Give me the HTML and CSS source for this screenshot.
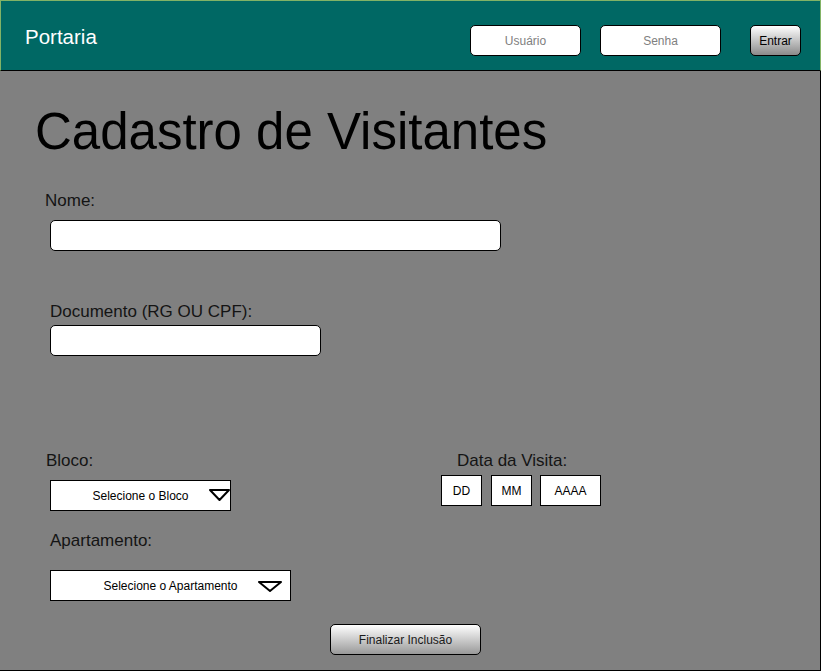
FILE: index.html
```html
<!DOCTYPE html>
<html lang="pt-BR">
<head>
<meta charset="utf-8">
<title>Portaria</title>
<link rel="stylesheet" href="styles.css">
</head>
<body>
<div class="page">
  <header class="topbar">
    <div class="brand">Portaria</div>
    <input class="login-field user" type="text" placeholder="Usuário">
    <input class="login-field pass" type="password" placeholder="Senha">
    <button class="btn btn-enter" type="button">Entrar</button>
  </header>
  <main class="content">
    <h1 class="title">Cadastro de Visitantes</h1>
    <label class="label label-nome">Nome:</label>
    <input class="field field-nome" type="text">
    <label class="label label-doc">Documento (RG OU CPF):</label>
    <input class="field field-doc" type="text">
    <div class="lower">
      <div class="col-left">
        <div class="label label-bloco">Bloco:</div>
        <div class="select select-bloco">
          <span>Selecione o Bloco</span>
          <svg class="caret caret-bloco" width="21" height="12" viewBox="0 0 21 12"><polygon points="1,1 20,1 10.5,11" fill="#fff" stroke="#000" stroke-width="2" stroke-linejoin="round"/></svg>
        </div>
        <div class="label label-apto">Apartamento:</div>
        <div class="select select-apto">
          <span>Selecione o Apartamento</span>
          <svg class="caret caret-apto" width="24" height="11" viewBox="0 0 24 11"><polygon points="1,1 23,1 12,10" fill="#fff" stroke="#000" stroke-width="2" stroke-linejoin="round"/></svg>
        </div>
      </div>
      <div class="col-right">
        <div class="label label-data">Data da Visita:</div>
        <div class="date-row">
          <div class="date-box date-dd">DD</div>
          <div class="date-box date-mm">MM</div>
          <div class="date-box date-aaaa">AAAA</div>
        </div>
      </div>
    </div>
    <button class="btn btn-finish" type="button">Finalizar Inclusão</button>
  </main>
</div>
</body>
</html>
```

FILE: styles.css
```css
* { box-sizing: border-box; }
html, body { margin: 0; padding: 0; background: #ffffff; }
body { font-family: "Liberation Sans", Arial, sans-serif; }

.page { width: 821px; height: 671px; display: flex; flex-direction: column; }

.topbar {
  height: 71px;
  background: #006864;
  border-top: 1px solid #82b366;
  border-left: 1px solid #82b366;
  border-right: 1px solid #82b366;
  border-bottom: 1px solid #000;
  display: flex;
  align-items: flex-start;
  padding: 0 19px 0 24px;
}
.brand {
  color: #ffffff;
  font-size: 20.5px;
  line-height: 20px;
  margin-top: 26px;
}
.login-field {
  height: 31px;
  margin-top: 24px;
  border: 1px solid #000;
  border-radius: 5px;
  background: #fff;
  font-family: "Liberation Sans", Arial, sans-serif;
  font-size: 12px;
  text-align: center;
  padding: 0;
  outline: none;
}
.login-field::placeholder { color: #808080; opacity: 1; }
.user { width: 111px; margin-left: auto; }
.pass { width: 121px; margin-left: 19px; }

.btn {
  border: 1px solid #000;
  border-radius: 5px;
  background: linear-gradient(#ffffff, #8a8a8a);
  font-family: "Liberation Sans", Arial, sans-serif;
  font-size: 12px;
  color: #000;
  padding: 0;
  height: 31px;
}
.btn-enter { width: 51px; margin-left: 29px; margin-top: 24px; }

.content {
  height: 600px;
  background: #808080;
  border-right: 1px solid #000;
  border-bottom: 1px solid #000;
  display: flex;
  flex-direction: column;
  align-items: flex-start;
}
.title {
  margin: 35px 0 0 35px;
  font-size: 51px;
  line-height: 51px;
  font-weight: normal;
  color: #000;
}
.label {
  display: block;
  font-size: 17px;
  line-height: 20px;
  color: #141414;
}
.label-nome { margin: 34px 0 0 45px; }
.field {
  height: 31px;
  border: 1px solid #000;
  border-radius: 5px;
  background: #fff;
  padding: 0;
  outline: none;
}
.field-nome { width: 451px; margin: 9px 0 0 50px; }
.label-doc { margin: 51px 0 0 50px; }
.field-doc { width: 271px; margin: 3px 0 0 50px; }

.lower { display: flex; margin-top: 95px; width: 100%; }
.col-left { width: 441px; display: flex; flex-direction: column; align-items: flex-start; }
.label-bloco { margin-left: 46px; }
.select {
  position: relative;
  height: 31px;
  background: #fff;
  border: 1px solid #000;
  display: flex;
  align-items: center;
  justify-content: center;
  font-size: 12px;
  color: #000;
}
.select-bloco { width: 181px; margin: 9px 0 0 50px; }
.label-apto { margin: 20px 0 0 50px; }
.select-apto { width: 241px; margin: 19px 0 0 50px; }
.caret { position: absolute; }
.caret-bloco { left: 158px; top: 8px; }
.caret-apto { left: 207px; top: 10px; }

.col-right { display: flex; flex-direction: column; align-items: flex-start; }
.label-data { margin-left: 16px; }
.date-row { display: flex; margin-top: 4px; }
.date-box {
  height: 31px;
  background: #fff;
  border: 1px solid #000;
  display: flex;
  align-items: center;
  justify-content: center;
  font-size: 12px;
  color: #000;
}
.date-dd { width: 41px; }
.date-mm { width: 41px; margin-left: 9px; }
.date-aaaa { width: 61px; margin-left: 8px; }

.btn-finish { width: 151px; margin: 23px 0 0 330px; background: linear-gradient(#ffffff, #999999); color: #1a1a1a; }
```
